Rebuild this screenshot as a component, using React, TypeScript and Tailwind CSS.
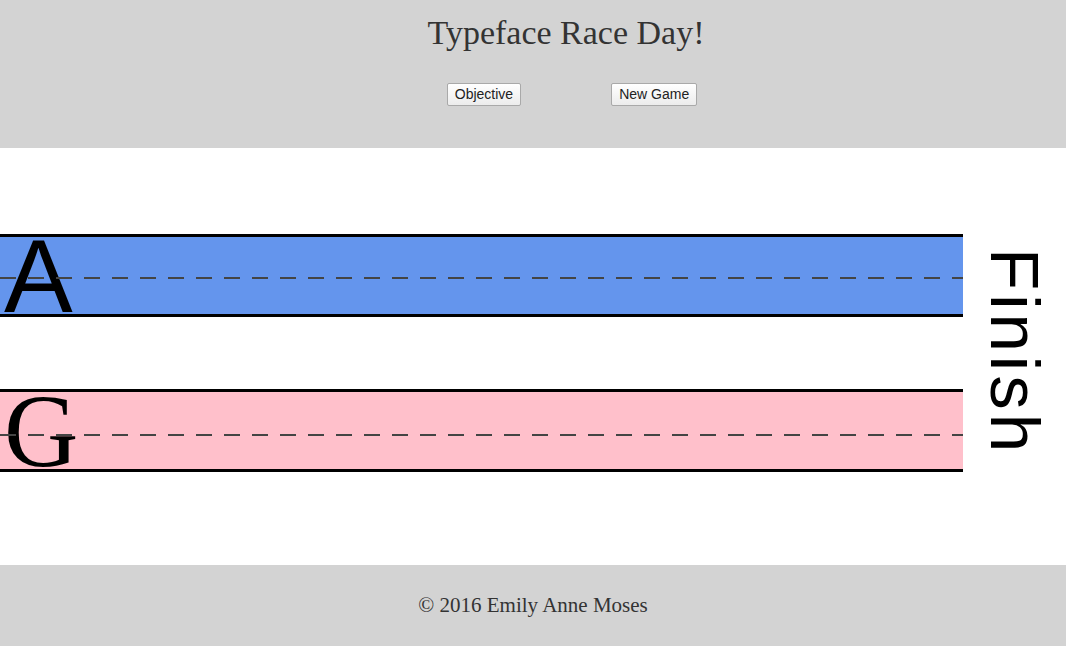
import React from 'react'

const serif = "font-['Liberation_Serif',serif]"
const sans = "font-['Liberation_Sans',Arial,sans-serif]"

function Lane({ letter, color, letterFont, dashTop }: { letter: string; color: string; letterFont: string; dashTop: string }) {
  return (
    <div className={`relative h-[83px] border-y-[3px] border-black ${color}`}>
      <span className={`absolute left-[4px] top-[-12px] text-[103px] leading-none text-black ${letterFont}`}>{letter}</span>
      {/* dashed centre line */}
      <div
        className={`absolute left-0 right-0 h-[2px] ${dashTop} bg-[repeating-linear-gradient(to_right,#444_0_16px,transparent_16px_28px)]`}
      ></div>
    </div>
  )
}

export default function App() {
  return (
    <div className="w-[1066px] min-h-[646px] bg-white flex flex-col">
      {/* header */}
      <header className="h-[148px] bg-[#d3d3d3] flex flex-col items-center pt-[13px] pl-[66px]">
        <h1 className={`${serif} text-[34px] leading-[40px] text-[#333]`}>Typeface Race Day!</h1>
        <div className="mt-[30px] flex gap-[90px] pl-[12px]">
          <button className={`${sans} h-[23px] px-[7px] text-[14px] text-[#222] border border-[#a9a9a9] rounded-[2px] bg-gradient-to-b from-white to-[#ececec]`}>
            Objective
          </button>
          <button className={`${sans} h-[23px] px-[7px] text-[14px] text-[#222] border border-[#a9a9a9] rounded-[2px] bg-gradient-to-b from-white to-[#ececec]`}>
            New Game
          </button>
        </div>
      </header>

      {/* track */}
      <main className="h-[417px] flex">
        <div className="w-[963px] flex flex-col gap-[72px] pt-[86px]">
          <Lane letter="A" color="bg-[#6495ed]" letterFont={sans} dashTop="top-[40px]" />
          <Lane letter="G" color="bg-[#ffc0cb]" letterFont={serif} dashTop="top-[42px]" />
        </div>
        <div className="flex-1 flex items-start justify-center pt-[100px]">
          <span className={`${sans} text-[69px] leading-none tracking-[4px] text-black [writing-mode:vertical-rl]`}>Finish</span>
        </div>
      </main>

      {/* footer */}
      <footer className="h-[81px] bg-[#d3d3d3] flex items-center justify-center">
        <p className={`${serif} text-[21px] text-[#333]`}>© 2016 Emily Anne Moses</p>
      </footer>
    </div>
  )
}
